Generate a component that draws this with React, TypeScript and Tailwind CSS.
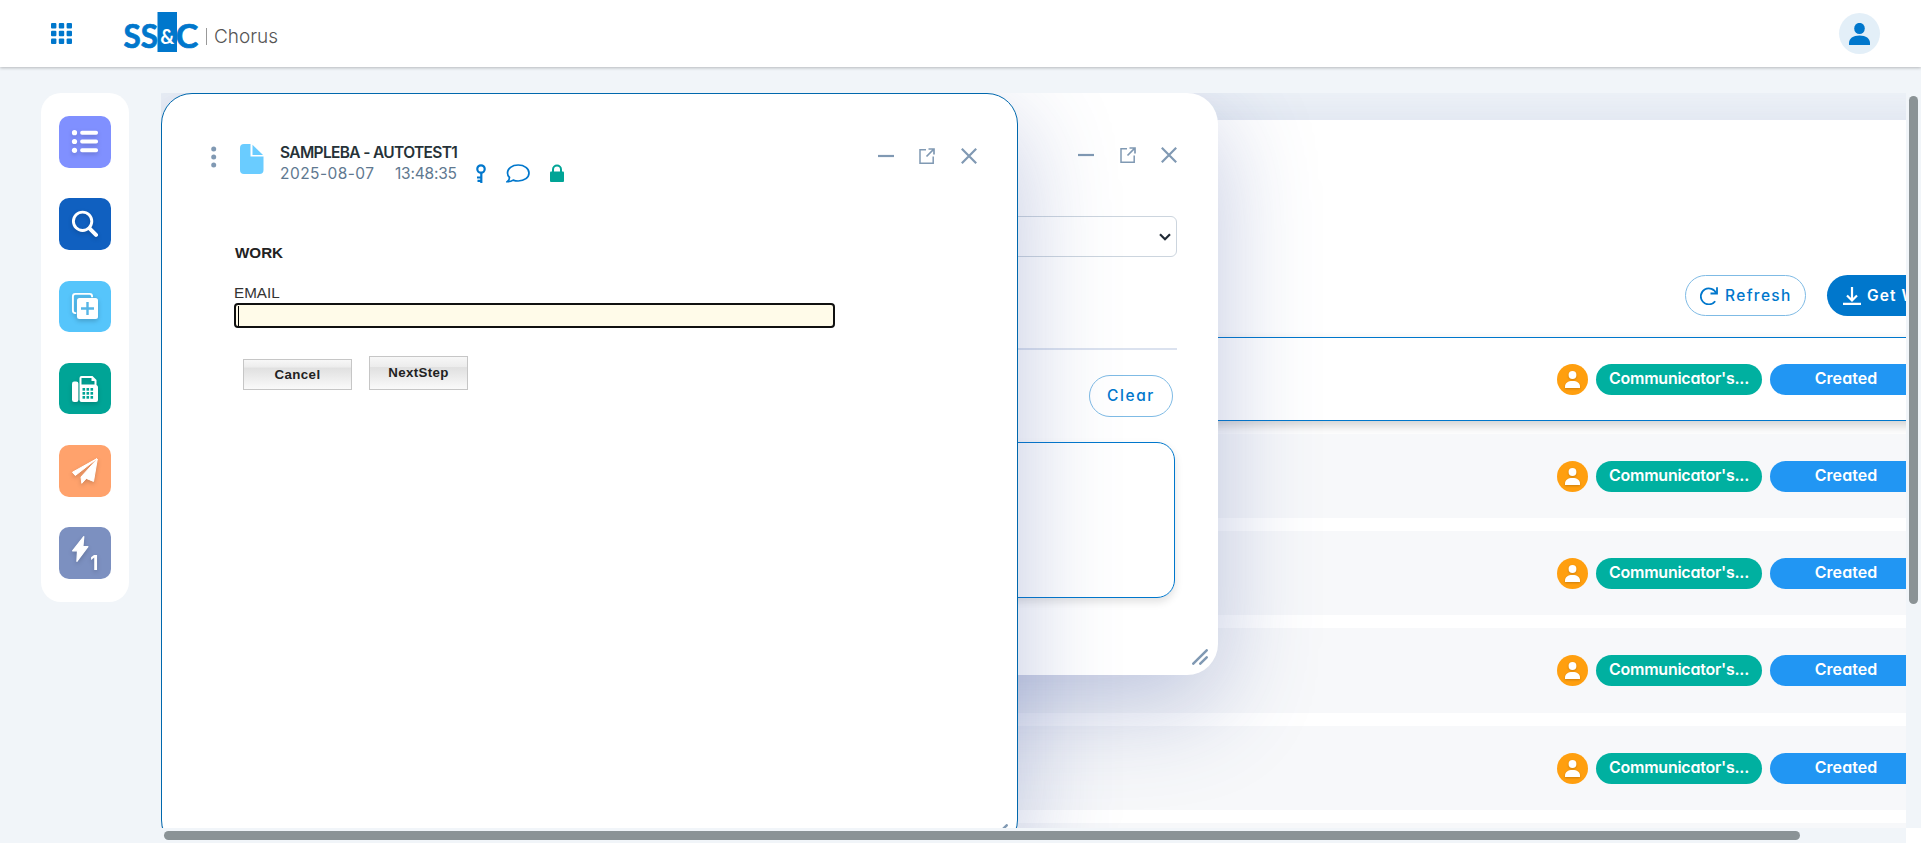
import type { ReactNode } from "react";

const FONT = "font-['Inter','Open_Sans',sans-serif] [font-feature-settings:'cv11']";

function Logo() {
  return (
    <svg width="80" height="42" viewBox="121 11 80 42" aria-label="SS&C">
      <rect x="157.5" y="12" width="19.5" height="40" fill="#0077cc" />
      <g fontFamily="Lato, sans-serif" fontWeight="700" fill="#0077cc" stroke="#0077cc" strokeWidth="0.7" fontSize="31.5">
        <text x="123.5" y="47.600" textLength="34.500" lengthAdjust="spacingAndGlyphs">SS</text>
        <text x="175.800" y="47.600" textLength="22.500" lengthAdjust="spacingAndGlyphs">C</text>
      </g>
      <text x="160.300" y="43.800" fontFamily="Lato, sans-serif" fontWeight="700" fontSize="20" fill="#fff" textLength="14" lengthAdjust="spacingAndGlyphs">&amp;</text>
    </svg>
  );
}

function Header() {
  return (
    <header className="relative z-10 flex h-[67px] items-center bg-white pl-[51px] pr-[41px] shadow-[0_1px_3px_rgba(0,0,0,0.25)]">
      <svg width="21" height="21" viewBox="0 0 21 21" fill="#0077cc">
        {[0, 7.8, 15.6].map((y) => [0, 7.8, 15.6].map((x) => <rect key={`${x}-${y}`} x={x} y={y} width="5.400" height="5.400" rx="1" />))}
      </svg>
      <div className="ml-[49px] mt-[-3px]"><Logo /></div>
      <span className="ml-[5px] mt-[5px] h-[17px] w-px bg-[#999]" />
      <span className="ml-[7px] mt-[7px] font-['Inter'] text-[19px] font-light leading-6 text-[#555]">Chorus</span>
      <div className="ml-auto grid size-[41px] place-items-center rounded-full bg-[#e3eff8]">
        <svg width="21" height="22" viewBox="0 0 21 22" fill="#0077cc">
          <ellipse cx="10.5" cy="5.5" rx="5.3" ry="5.6" />
          <path d="M0 22v-2c0-4.500 4-7.500 10.500-7.500S21 15.500 21 20v2z" />
        </svg>
      </div>
    </header>
  );
}

const TILES: { bg: string; icon: ReactNode }[] = [
  {
    bg: "bg-[#8090ff]",
    icon: (
      <g>
        {[16.7, 25.5, 34.3].map((y) => (
          <g key={y}>
            <circle cx="15.500" cy={y} r="2.600" />
            <rect x="21.200" y={y - 2} width="17.800" height="4" rx="1.800" />
          </g>
        ))}
      </g>
    ),
  },
  {
    bg: "bg-[#1060c0]",
    icon: (
      <g fill="none" stroke="#fff" strokeLinecap="round">
        <circle cx="23.600" cy="23.300" r="9.200" strokeWidth="2.900" />
        <path d="M30.500 30.300l6.500 6.500" strokeWidth="4" />
      </g>
    ),
  },
  {
    bg: "bg-[#56c5fb]",
    icon: (
      <g>
        <rect x="13.900" y="12.900" width="19.200" height="19.200" rx="2.500" fill="none" stroke="#fff" strokeWidth="1.900" />
        <rect x="17.200" y="16.200" width="22" height="22" rx="3.500" fill="#56b5e6" />
        <rect x="18" y="17" width="21" height="21" rx="2.500" />
        <path d="M28.500 21v13M22 27.500h13" stroke="#56b5e6" strokeWidth="2.400" />
      </g>
    ),
  },
  {
    bg: "bg-[#00a496]",
    icon: (
      <g>
        <rect x="13" y="18.500" width="6.400" height="20.500" rx="2.200" />
        <path fillRule="evenodd" d="M20.500 15a2 2 0 0 1 2-2h11l4 4v5c1 .5 1.500 1.300 1.500 2.500V37a2 2 0 0 1-2 2H22.500a2 2 0 0 1-2-2zM22.500 15v6.500h13V18h-3v-3z" />
        <g fill="#00a496">
          {[25, 29, 33].map((y) => [23.5, 27.5, 31.5].map((x) => <rect key={`${x}-${y}`} x={x} y={y} width="2.600" height="2.700" />))}
        </g>
      </g>
    ),
  },
  {
    bg: "bg-[#ffa26c]",
    icon: (
      <g stroke="#fff" strokeWidth="1" strokeLinejoin="round">
        <path d="M38 13.600L13.500 27.200l2.800 3.300z" />
        <path d="M38.300 14L22 32l.8 6.300 4.500-4.900 7.200 3z" />
      </g>
    ),
  },
  {
    bg: "bg-[#7c90c0]",
    icon: (
      <g>
        <path d="M24.800 9.500L13.600 23.800h4.900L17.900 34.300 28.900 19.700h-5z" stroke="#fff" strokeWidth="1.200" strokeLinejoin="round" />
        <text x="31.200" y="42.800" fontFamily="Inter, sans-serif" fontWeight="700" fontSize="19.500" textLength="8" lengthAdjust="spacingAndGlyphs">1</text>
      </g>
    ),
  },
];

function Sidebar() {
  return (
    <nav className="ml-[41px] mt-[26px] flex h-[509px] w-[88px] flex-none flex-col items-center gap-[30.700px] rounded-[20px] bg-white pt-[23px]">
      {TILES.map((t) => (
        <div key={t.bg} className={`h-[51.600px] w-[52px] rounded-[10px] ${t.bg}`}>
          <svg width="52" height="52" viewBox="0 0 52 52" fill="#fff" className="drop-shadow-[0_2px_2px_rgba(0,0,0,0.18)]">
            {t.icon}
          </svg>
        </div>
      ))}
    </nav>
  );
}

function WindowControls() {
  return (
    <div className="flex items-center gap-[25.500px] text-[#8099b3]">
      <svg width="16" height="16" viewBox="0 0 16 16" stroke="currentColor" strokeWidth="2.200"><path d="M0 8h16" /></svg>
      <svg width="16" height="16" viewBox="0 0 16 16" fill="none" stroke="currentColor" strokeWidth="1.500">
        <path d="M7 1.800H1v13.400h13.200V8.500" />
        <path d="M9.500 1H15v5.500M14.800 1.200L7.500 8.500" strokeWidth="1.700" />
      </svg>
      <svg width="16" height="16" viewBox="0 0 16 16" stroke="currentColor" strokeWidth="2.200"><path d="M.8.8l14.400 14.400M15.200.8L.8 15.200" /></svg>
    </div>
  );
}

function Grip() {
  return (
    <svg width="16" height="16" viewBox="0 0 16 16" stroke="#8099b3" strokeWidth="2.500" strokeLinecap="round">
      <path d="M1.300 14.700L14.700 1.300M8.300 14.700l6.400-6.400" />
    </svg>
  );
}

function Row({ selected }: { selected?: boolean }) {
  return (
    <div
      className={
        selected
          ? "flex h-[84px] flex-none items-start border-y border-[#0077cc] bg-white pt-[26px] shadow-[0_5px_10px_rgba(0,0,0,0.18)]"
          : "flex h-[84.200px] flex-none items-start bg-[#f7f8fa] pt-[27px]"
      }
    >
      <div className="ml-[1396px] grid size-[31px] flex-none place-items-center rounded-full bg-[#ff9f0f]">
        <svg width="15" height="17" viewBox="0 0 15 17" fill="#fff" className="drop-shadow-[0_1px_1px_rgba(0,0,0,0.2)]">
          <ellipse cx="7.500" cy="4" rx="3.900" ry="4" />
          <path d="M0 17v-1.500c0-3.500 3-5.500 7.500-5.500s7.500 2 7.500 5.500V17z" />
        </svg>
      </div>
      <div className="ml-2 h-[31px] w-[166px] flex-none rounded-full bg-[#00b0a0] text-center text-[16px] font-semibold leading-[29px] tracking-[-0.250px] text-white">Communicator's...</div>
      <div className="ml-2 h-[31px] w-[152px] flex-none rounded-full bg-[#2196f3] text-center text-[16px] font-semibold leading-[29px] tracking-[0.050px] text-white">Created</div>
    </div>
  );
}

function Worklist() {
  return (
    <section className="mt-[27px] flex h-[900px] w-[2000px] flex-col bg-white shadow-[0_20px_80px_rgba(61,84,158,0.220)]">
      <div className="ml-[1524px] mt-[155px] flex h-[62px] flex-none items-start gap-[21px]">
        <button className="flex h-[41px] w-[121px] flex-none items-center rounded-full border border-[#7fbbe5] pl-[14px] text-[15.500px] font-medium tracking-[1.350px] text-[#0077cc]">
          <svg width="18" height="18" viewBox="0 0 18 18" fill="none" stroke="currentColor" strokeWidth="1.800" className="mr-[7px] flex-none">
            <path d="M15.200 14.200A8 8 0 1 1 16.300 6.500" />
            <path d="M17 .3v6.200h-6.500" />
          </svg>
          Refresh
        </button>
        <button className="flex h-[41px] w-[140px] flex-none items-center whitespace-nowrap rounded-full bg-[#0077cc] pl-4 text-[15.500px] font-semibold tracking-[1.100px] text-white">
          <svg width="18" height="18" viewBox="0 0 18 18" fill="none" stroke="currentColor" strokeWidth="2.200" className="mr-[6px] flex-none">
            <path d="M9 0v13M4 8.500l5 5 5-5M0 16.800h18" />
          </svg>
          Get Work
        </button>
      </div>
      <div className="flex flex-col gap-[13px]">
        <Row selected />
        {[1, 2, 3, 4, 5].map((i) => <Row key={i} />)}
      </div>
    </section>
  );
}

function SearchWindow() {
  return (
    <section className="absolute left-[400px] top-0 flex h-[582px] w-[657px] flex-col rounded-[31px] bg-white pl-10 shadow-[0_30px_100px_rgba(61,84,158,0.320)]">
      <div className="mr-[41px] mt-[54px] flex justify-end"><WindowControls /></div>
      <div className="mr-[41px] mt-[53px] flex h-[41px] items-center justify-end rounded-[6px] border border-[#ccd5de] pr-[5px]">
        <svg width="12" height="8" viewBox="0 0 12 8" fill="none" stroke="#212b36" strokeWidth="2.200"><path d="M1 1.200l5 5 5-5" /></svg>
      </div>
      <div className="mr-[41px] mt-[91px] h-[2px] bg-[#dbe2ef]" />
      <button className="ml-auto mr-[45px] mt-[25px] h-[42px] w-[84px] rounded-full border border-[#7fbbe5] text-[15.500px] font-medium leading-[38px] tracking-[1.600px] text-[#0077cc]">Clear</button>
      <div className="mr-[43px] mt-[25px] h-[156px] rounded-[18px] border border-[#0077cc] shadow-[0_4px_8px_rgba(0,0,0,0.120)]" />
      <div className="absolute bottom-[10px] right-[10px]"><Grip /></div>
    </section>
  );
}

function FormWindow() {
  return (
    <section className="absolute left-0 top-0 flex h-[758px] w-[857px] flex-col rounded-[31px] border border-[#0068ad] bg-white shadow-[0_30px_100px_rgba(61,84,158,0.320)]">
      <div className="mt-[50px] flex h-[44px] items-start pl-[49px] pr-[40.500px]">
        <svg width="6" height="22" viewBox="0 0 6 22" fill="#8099b3" className="mt-[2px]">
          <circle cx="2.700" cy="3" r="2.500" /><circle cx="2.700" cy="11" r="2.500" /><circle cx="2.700" cy="19" r="2.500" />
        </svg>
        <svg width="24" height="30" viewBox="0 0 24 30" fill="#6accff" className="ml-[23px]">
          <path d="M4 0h6.500v12.500H23.500V26a4 4 0 0 1-4 4H4a4 4 0 0 1-4-4V4a4 4 0 0 1 4-4z" />
          <path d="M12.500.8L23 11H12.500z" />
        </svg>
        <div className="ml-[16px]">
          <div className="whitespace-nowrap text-[15.500px] font-semibold leading-[18px] tracking-[-0.650px] text-[#263238]">SAMPLEBA - AUTOTEST1</div>
          <div className="mt-[2px] flex items-start text-[15.500px] leading-[20px] text-[#607890]">
            <span className="w-[95px] whitespace-nowrap tracking-[0.450px]">2025-08-07</span>
            <span className="ml-[20px] w-[81px] whitespace-nowrap tracking-[-0.200px]">13:48:35</span>
            <svg width="10" height="19" viewBox="0 0 10 19" fill="none" stroke="#0077cc" strokeWidth="2.200">
              <circle cx="5" cy="5" r="3.700" /><path d="M5.300 8.500V19M5 13.500H1M5 16.800H1.500" />
            </svg>
            <svg width="24" height="19" viewBox="0 0 24 19" fill="none" stroke="#0077cc" strokeWidth="1.700" className="ml-5">
              <path d="M3.500 13.500C1.800 12 1.500 10.500 1.500 9 1.500 4.500 6 1 12.200 1S23 4.500 23 9s-4.500 8-10.800 8c-2 0-3.500-.3-5-.9-1.700 1.200-3.700 1.700-6 1.600 1.400-1 2.300-2.500 2.300-4.200z" />
            </svg>
            <svg width="14" height="18" viewBox="0 0 14 18" className="ml-[20px]">
              <path d="M3 8V5.500a4 4 0 0 1 8 0V8" fill="none" stroke="#00a496" strokeWidth="2" />
              <rect y="7.500" width="14" height="10.500" rx="1" fill="#00a496" />
            </svg>
          </div>
        </div>
        <div className="ml-auto mt-[4px]"><WindowControls /></div>
      </div>
      <form className="ml-[72px] mt-[55px] font-['Liberation_Sans',Arial,sans-serif] text-[15.200px] text-[#222]">
        <h2 className="pl-px font-bold leading-5">WORK</h2>
        <label className="mt-5 block leading-5 text-[#333]">EMAIL</label>
        <div className="h-[25px] w-[601px] rounded-[4px] border-2 border-[#101010] bg-[#fffbe9] pl-[2px] pt-px">
          <div className="h-5 w-px bg-black" />
        </div>
        <div className="ml-[9px] mt-[28px] flex items-end gap-[17px] text-[13.300px] font-bold">
          <button type="button" className="h-[31px] w-[109px] border border-[#c6c6c6] bg-linear-[to_bottom,#f7f7f7_0%,#ececec_25%,#e0e0e0_27%,#fafafa_100%] tracking-[0.400px]">Cancel</button>
          <button type="button" className="h-[34px] w-[99px] border border-[#c6c6c6] bg-linear-[to_bottom,#f7f7f7_0%,#ececec_31%,#e0e0e0_33%,#fafafa_100%] tracking-[0.350px]">NextStep</button>
        </div>
      </form>
      <div className="absolute bottom-[10px] right-[9px]"><Grip /></div>
    </section>
  );
}

export default function App() {
  return (
    <div className={`flex h-[843px] w-[1921px] flex-col overflow-hidden bg-[#f1f5f9] ${FONT}`}>
      <Header />
      <div className="flex min-h-0 flex-1">
        <Sidebar />
        <div className="ml-8 mt-[26px] flex w-[1760px] flex-none flex-col">
          <div className="flex h-[735px]">
            <main className="relative w-[1745px] flex-none overflow-hidden">
              <Worklist />
              <SearchWindow />
              <FormWindow />
            </main>
            <div className="w-[15px] pl-[3px] pt-[3px]">
              <div className="h-[508px] w-[9px] rounded-full bg-[#8b9396]" />
            </div>
          </div>
          <div className="flex h-[15px]">
            <div className="w-[1745px] pl-[3px] pt-[3px]">
              <div className="h-[9px] w-[1636px] rounded-full bg-[#8b9396]" />
            </div>
            <div className="w-[15px] bg-white" />
          </div>
        </div>
      </div>
    </div>
  );
}
